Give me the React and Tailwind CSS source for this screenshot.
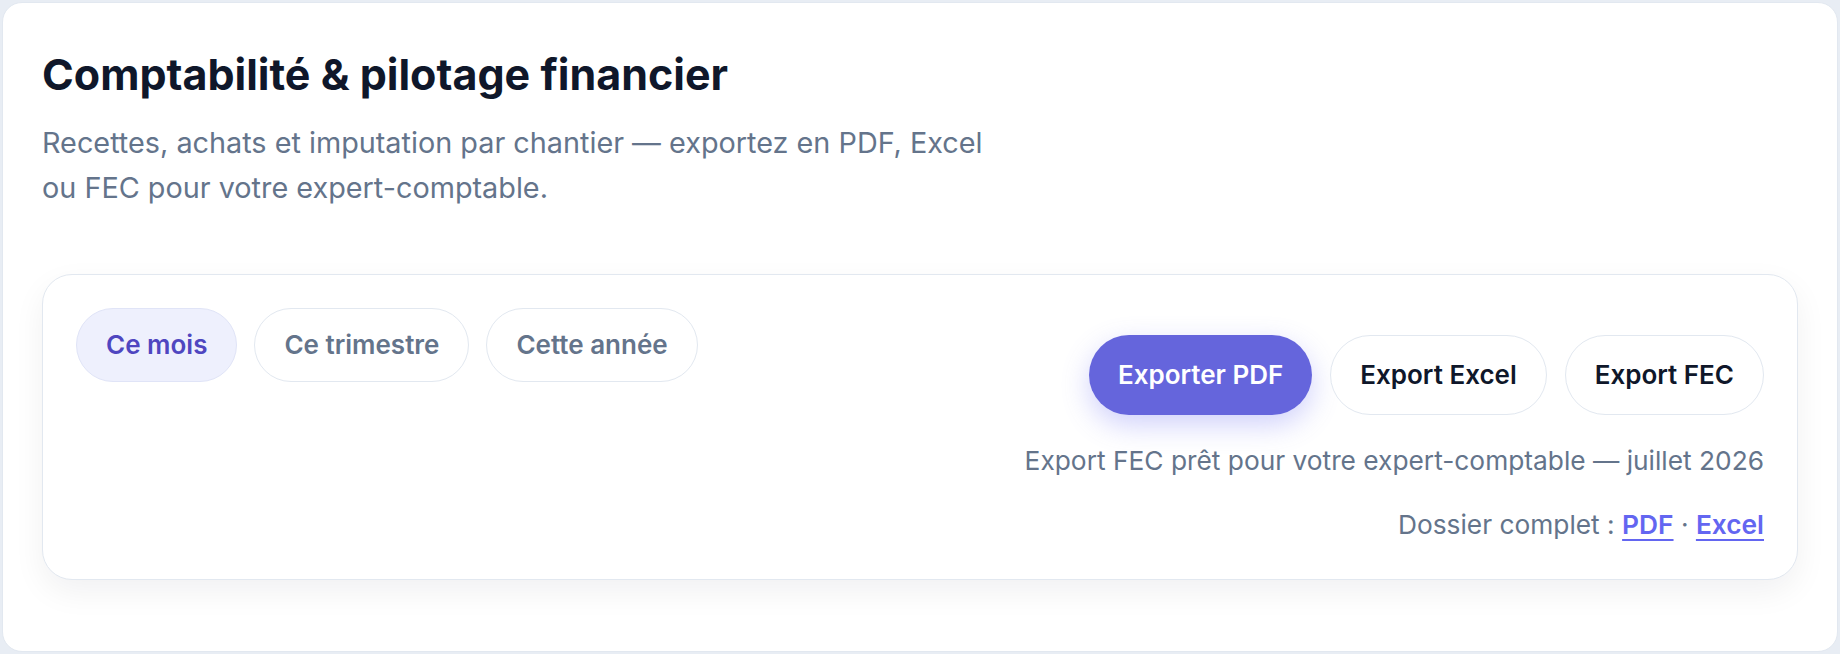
import React from "react";

const font = { fontFamily: "Inter, 'Noto Sans', 'Liberation Sans', sans-serif" };

function Chip({ active, children }) {
  return (
    <button
      className={
        active
          ? "h-[74px] px-[29px] rounded-full border border-[#e0e4f7] bg-[#eef0fd] text-[26px] font-semibold text-[#4f46c0] leading-none"
          : "h-[74px] px-[29px] rounded-full border border-[#e2e8f0] bg-white text-[26px] font-semibold text-[#64748b] leading-none"
      }
    >
      {children}
    </button>
  );
}

export default function App() {
  return (
    <div className="h-screen w-full bg-[#e8edf4] p-[2px]" style={font}>
      <div className="h-full rounded-[20px] border border-[#e2e8f0] bg-white px-[39px] pt-[46px]">
        <h1 className="text-[43px] leading-[1.2] font-bold text-[#0f172a]">
          Comptabilité &amp; pilotage financier
        </h1>
        <p className="mt-[19px] max-w-[975px] text-[28.8px] leading-[45px] text-[#64748b]">
          Recettes, achats et imputation par chantier — exportez en PDF, Excel ou FEC pour votre expert-comptable.
        </p>

        <div className="mt-[64px] rounded-[30px] border border-[#e2e8f0] bg-white px-[33px] pt-[33px] pb-[36px] shadow-[0_12px_32px_rgba(15,23,42,0.06)]">
          <div className="flex items-start justify-between">
            <div className="flex gap-[17px]">
              <Chip active>Ce mois</Chip>
              <Chip>Ce trimestre</Chip>
              <Chip>Cette année</Chip>
            </div>
            <div className="mt-[27px] flex flex-col items-end">
              <div className="flex gap-[18px]">
                <button className="h-[80px] px-[29px] rounded-full bg-[#6565dc] text-[26px] font-semibold text-white leading-none shadow-[0_10px_28px_rgba(99,102,241,0.30)]">
                  Exporter PDF
                </button>
                <button className="h-[80px] px-[29px] rounded-full border border-[#e2e8f0] bg-white text-[26px] font-semibold text-[#0f172a] leading-none">
                  Export Excel
                </button>
                <button className="h-[80px] px-[29px] rounded-full border border-[#e2e8f0] bg-white text-[26px] font-semibold text-[#0f172a] leading-none">
                  Export FEC
                </button>
              </div>
              <p className="mt-[28px] text-[26.3px] leading-[36px] text-[#64748b]">
                Export FEC prêt pour votre expert-comptable — juillet 2026
              </p>
              <p className="mt-[28px] text-[26.3px] leading-[36px] text-[#64748b]">
                Dossier complet :{" "}
                <a className="font-semibold text-[#6366f1] underline decoration-2 underline-offset-[5px]">PDF</a>
                {" · "}
                <a className="font-semibold text-[#6366f1] underline decoration-2 underline-offset-[5px]">Excel</a>
              </p>
            </div>
          </div>
        </div>
      </div>
    </div>
  );
}
